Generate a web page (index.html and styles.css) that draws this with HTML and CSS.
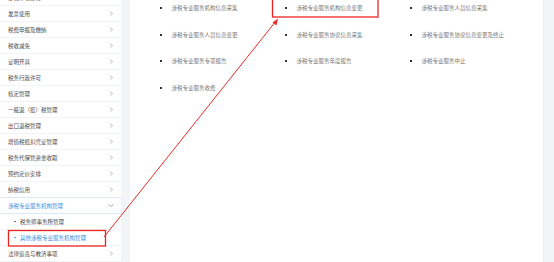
FILE: index.html
```html
<!DOCTYPE html>
<html lang="zh">
<head>
<meta charset="utf-8">
<link rel="stylesheet" href="styles.css">
</head>
<body>
<div class="page">
  <aside class="side">
    <div class="row"><span class="txt">涉税事项办理</span><svg class="chev" viewBox="0 0 3 6"><polyline points="0.5,0.5 2.5,3 0.5,5.5"/></svg></div>
    <div class="row"><span class="txt">发票使用</span><svg class="chev" viewBox="0 0 3 6"><polyline points="0.5,0.5 2.5,3 0.5,5.5"/></svg></div>
    <div class="row"><span class="txt">税费申报及缴纳</span><svg class="chev" viewBox="0 0 3 6"><polyline points="0.5,0.5 2.5,3 0.5,5.5"/></svg></div>
    <div class="row"><span class="txt">税收减免</span><svg class="chev" viewBox="0 0 3 6"><polyline points="0.5,0.5 2.5,3 0.5,5.5"/></svg></div>
    <div class="row"><span class="txt">证明开具</span><svg class="chev" viewBox="0 0 3 6"><polyline points="0.5,0.5 2.5,3 0.5,5.5"/></svg></div>
    <div class="row"><span class="txt">税务行政许可</span><svg class="chev" viewBox="0 0 3 6"><polyline points="0.5,0.5 2.5,3 0.5,5.5"/></svg></div>
    <div class="row"><span class="txt">核定管理</span><svg class="chev" viewBox="0 0 3 6"><polyline points="0.5,0.5 2.5,3 0.5,5.5"/></svg></div>
    <div class="row"><span class="txt">一般退（抵）税管理</span><svg class="chev" viewBox="0 0 3 6"><polyline points="0.5,0.5 2.5,3 0.5,5.5"/></svg></div>
    <div class="row"><span class="txt">出口退税管理</span><svg class="chev" viewBox="0 0 3 6"><polyline points="0.5,0.5 2.5,3 0.5,5.5"/></svg></div>
    <div class="row"><span class="txt">增值税抵扣凭证管理</span><svg class="chev" viewBox="0 0 3 6"><polyline points="0.5,0.5 2.5,3 0.5,5.5"/></svg></div>
    <div class="row"><span class="txt">税务代保管资金收取</span><svg class="chev" viewBox="0 0 3 6"><polyline points="0.5,0.5 2.5,3 0.5,5.5"/></svg></div>
    <div class="row"><span class="txt">预约定价安排</span><svg class="chev" viewBox="0 0 3 6"><polyline points="0.5,0.5 2.5,3 0.5,5.5"/></svg></div>
    <div class="row"><span class="txt">纳税信用</span><svg class="chev" viewBox="0 0 3 6"><polyline points="0.5,0.5 2.5,3 0.5,5.5"/></svg></div>
    <div class="row open"><span class="txt">涉税专业服务机构管理</span><svg class="chev-down" viewBox="0 0 6 3"><polyline points="0.5,0.5 3,2.5 5.5,0.5"/></svg></div>
    <div class="row sub"><span class="dot"></span><span class="txt">税务师事务所管理</span></div>
    <div class="row sub active"><span class="dot"></span><span class="txt">其他涉税专业服务机构管理</span></div>
    <div class="row"><span class="txt">法律追责与救济事项</span><svg class="chev" viewBox="0 0 3 6"><polyline points="0.5,0.5 2.5,3 0.5,5.5"/></svg></div>
  </aside>
  <main class="main">
    <ul class="grid">
      <li><span class="sq"></span>涉税专业服务机构信息采集</li>
      <li><span class="sq"></span>涉税专业服务机构信息变更</li>
      <li><span class="sq"></span>涉税专业服务人员信息采集</li>
      <li><span class="sq"></span>涉税专业服务人员信息变更</li>
      <li><span class="sq"></span>涉税专业服务协议信息采集</li>
      <li><span class="sq"></span>涉税专业服务协议信息变更及终止</li>
      <li><span class="sq"></span>涉税专业服务专项报告</li>
      <li><span class="sq"></span>涉税专业服务年度报告</li>
      <li><span class="sq"></span>涉税专业服务中止</li>
      <li><span class="sq"></span>涉税专业服务收费</li>
    </ul>
  </main>
  <div class="rail"></div>
</div>
<svg class="annot" viewBox="0 0 554 262" width="554" height="262">
  <rect x="8.5" y="230.5" width="97" height="15.5" fill="none" stroke="#e8261f" stroke-width="1.3"/>
  <rect x="272.5" y="-1" width="105.5" height="18" fill="none" stroke="#e8261f" stroke-width="1.3"/>
  <line x1="104" y1="237" x2="276" y2="21" stroke="#ee2a24" stroke-width="1"/>
  <polygon points="278,18.5 272.6,22.4 276.4,25.4" fill="#ee2a24"/>
</svg>
</body>
</html>
```

FILE: styles.css
```css
* { box-sizing: border-box; }
html, body { margin: 0; padding: 0; }
body {
  width: 554px;
  height: 262px;
  overflow: hidden;
  background: #f3f4f8;
  font-family: "Noto Sans CJK SC", "Noto Sans", sans-serif;
  font-size: 5.5px;
  position: relative;
}
.page {
  display: flex;
  height: 262px;
}
.side {
  width: 121px;
  flex: none;
  background: #fff;
  margin-top: -10px;
  height: 272px;
}
.row {
  height: 16px;
  display: flex;
  align-items: center;
  padding: 0 8px;
  border-bottom: 1px solid #f3f4f6;
  color: #4a4a4a;
  white-space: nowrap;
}
.row .txt { flex: 1; }
.chev {
  width: 3px;
  height: 5px;
  fill: none;
  stroke: #888;
  stroke-width: 0.7;
}
.chev-down {
  width: 6px;
  height: 3px;
  fill: none;
  stroke: #888;
  stroke-width: 0.7;
  margin-right: -1px;
}
.row.open {
  color: #3b8fdc;
  border-top: 1px solid #dde9f6;
  border-bottom: 1px solid #dde9f6;
  height: 17px;
  margin-top: -1px;
}
.row.sub { padding-left: 14px; }
.row.sub .dot {
  width: 1.5px;
  height: 1.5px;
  background: #666;
  border-radius: 50%;
  margin-right: 4.5px;
}
.row.sub.active { color: #3b8fdc; }
.row.sub.active .dot { background: #3b8fdc; }
.main {
  margin-left: 9px;
  width: 413px;
  flex: none;
  background: #fff;
  height: 262px;
}
.rail {
  flex: 1;
  border-left: 1px solid #eceef2;
}
.grid {
  list-style: none;
  margin: 0;
  padding: 4px 0 0 30px;
  display: grid;
  grid-template-columns: 125px 125px 125px;
  grid-auto-rows: 8px;
  row-gap: 18.67px;
}
.grid li {
  display: flex;
  align-items: center;
  line-height: 8px;
  color: #777;
  white-space: nowrap;
}
.sq {
  width: 2px;
  height: 2px;
  background: #333;
  margin-right: 9.5px;
  flex: none;
}
.annot {
  position: absolute;
  left: 0;
  top: 0;
  pointer-events: none;
}
```
